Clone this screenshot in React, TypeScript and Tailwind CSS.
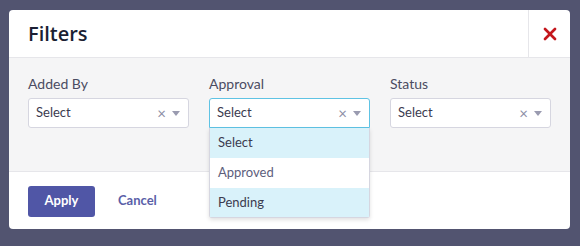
import { X } from 'lucide-react'

function SelectBox({ focused }: { focused?: boolean }) {
  return (
    <div
      className={`h-[30px] w-full flex items-center bg-white border rounded-[3px] pl-[7px] pr-[8px] ${
        focused ? 'border-[#5fc3e4] rounded-b-none' : 'border-[#d6d6e0]'
      }`}
    >
      <span className="flex-1 text-[13px] text-[#3b3b4f]">Select</span>
      <span className="text-[15px] leading-none text-[#8d8ea6] mr-[6px]">×</span>
      <span className="w-0 h-0 border-l-[4px] border-r-[4px] border-t-[5px] border-l-transparent border-r-transparent border-t-[#9a9bb0]" />
    </div>
  )
}

function Field({ label, open }: { label: string; open?: boolean }) {
  return (
    <div className="w-[161px] relative">
      <div className="text-[14px] text-[#4b4c62] leading-[20px] mb-[4px]">{label}</div>
      <SelectBox focused={open} />
      {open && (
        <div className="absolute left-0 top-[54px] w-full bg-white border border-[#d6d6e0] border-t-0 rounded-b-[3px] shadow-[0_2px_4px_rgba(0,0,0,0.12)] text-[13px]">
          <div className="h-[30px] flex items-center px-[8px] bg-[#d9f2fa] text-[#3b3b4f]">Select</div>
          <div className="h-[30px] flex items-center px-[8px] bg-white text-[#5d5e7c]">Approved</div>
          <div className="h-[29px] flex items-center px-[8px] bg-[#d9f2fa] text-[#3b3b4f]">Pending</div>
        </div>
      )}
    </div>
  )
}

export default function App() {
  return (
    <div
      className="w-[580px] h-[246px] bg-[#525470] pt-[10px] pl-[9px]"
      style={{ fontFamily: 'Lato, "Noto Sans", sans-serif' }}
    >
      <div className="w-[561px] h-[219px] bg-white rounded-[4px] flex flex-col overflow-visible">
        <div className="h-[48px] flex border-b border-[#e6e6ea]">
          <div
            className="flex-1 flex items-center pl-[19px] text-[20px] font-semibold text-[#1b1f33]"
            style={{ fontFamily: '"Open Sans", "Noto Sans", sans-serif' }}
          >
            Filters
          </div>
          <div className="w-[42px] border-l border-[#e6e6ea] flex items-center justify-center">
            <X className="w-[20px] h-[20px] text-[#c4161c]" strokeWidth={3.2} />
          </div>
        </div>
        <div className="h-[114px] bg-[#f5f5f6] border-b border-[#e6e6ea] pt-[16px] px-[19px] flex gap-[20px] relative z-10">
          <Field label="Added By" />
          <Field label="Approval" open />
          <Field label="Status" />
        </div>
        <div className="flex-1 flex items-center pl-[19px] gap-[23px] pt-[1px]">
          <button className="w-[67px] h-[31px] rounded-[3px] bg-[#5056a6] text-white text-[13px] font-bold">
            Apply
          </button>
          <button className="text-[13px] font-bold text-[#5a5fa8]">Cancel</button>
        </div>
      </div>
    </div>
  )
}
